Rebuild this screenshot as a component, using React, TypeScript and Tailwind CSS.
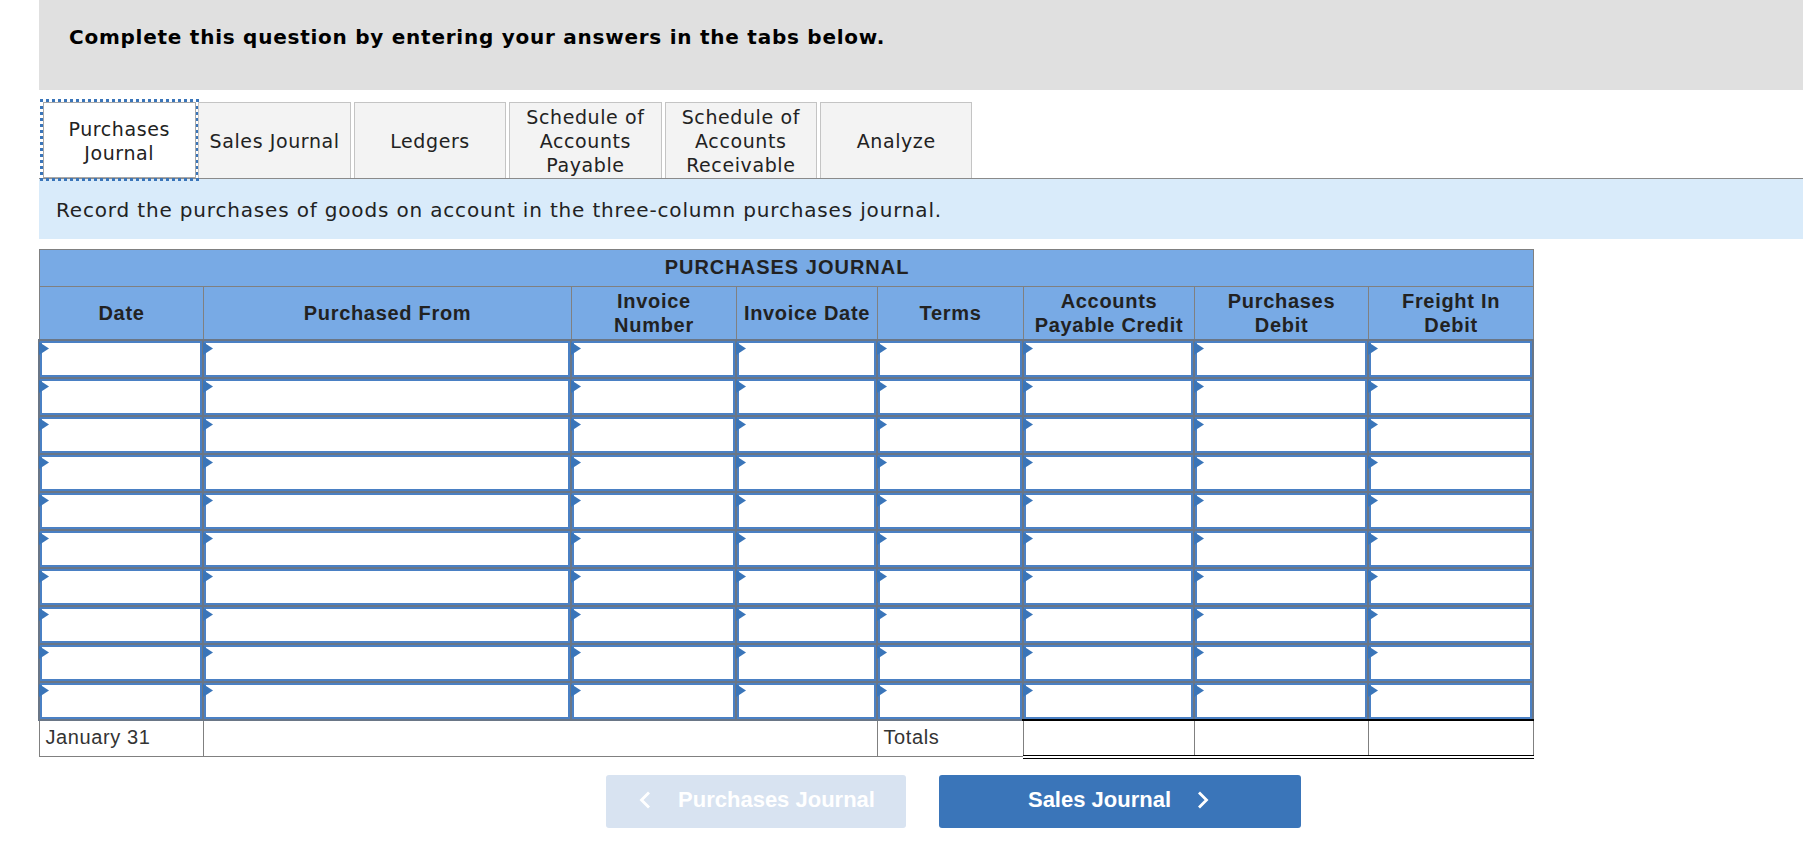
import React from "react";

const tabs = [
  { label: ["Purchases", "Journal"], active: true },
  { label: ["Sales Journal"] },
  { label: ["Ledgers"] },
  { label: ["Schedule of", "Accounts", "Payable"] },
  { label: ["Schedule of", "Accounts", "Receivable"] },
  { label: ["Analyze"] },
];

const colWidths = [164, 368, 165, 141, 146, 171, 174, 165];
const headers: string[][] = [
  ["Date"],
  ["Purchased From"],
  ["Invoice", "Number"],
  ["Invoice Date"],
  ["Terms"],
  ["Accounts", "Payable Credit"],
  ["Purchases", "Debit"],
  ["Freight In", "Debit"],
];

function InputCell() {
  return (
    <td className="border-2 border-[#6a7686] p-0 h-[38px]">
      <div className="relative h-[36px] border-2 border-[#4a80c4] bg-white">
        <svg className="absolute left-[-3px] top-[-1px]" width="10" height="13" viewBox="0 0 10 13">
          <path d="M0 0 L10 6.5 L0 13 Z" fill="#3a75b9" />
        </svg>
      </div>
    </td>
  );
}

export default function App() {
  return (
    <div className="min-h-[858px] bg-white font-['DejaVu_Sans',sans-serif] text-[#222]">
      <div className="ml-[39px] h-[90px] bg-[#e0e0e0] pl-[30px] pt-[22px]">
        <p className="text-[20px] leading-[30px] font-bold text-black tracking-[0.75px]">
          Complete this question by entering your answers in the tabs below.
        </p>
      </div>

      <div className="ml-[39px] mt-[12px] flex h-[77px] gap-[2.9px] border-b border-[#8a8a8a] pl-[4px]">
        {tabs.map((t, i) => (
          <div
            key={i}
            className={
              "flex h-[76px] w-[152.5px] flex-col items-center justify-center border text-[19px] leading-[24px] tracking-[0.6px] text-[#222] " +
              (t.active
                ? "border-[#a8a8a8] bg-white pt-[1px] outline-[3px] outline-dotted outline-[#3a75b9]"
                : "border-[#c4c4c4] border-b-0 bg-[#f3f3f3]")
            }
          >
            {t.label.map((l) => (
              <span key={l} className="whitespace-nowrap">{l}</span>
            ))}
          </div>
        ))}
      </div>

      <div className="ml-[39px] flex h-[60px] items-center bg-[#d9ebfa] pl-[17px] pt-[1px] text-[20px] tracking-[0.83px] text-[#222]">
        Record the purchases of goods on account in the three-column purchases journal.
      </div>

      <table className="ml-[38px] mt-[10px] w-[1495px] table-fixed border-collapse font-['Liberation_Sans',sans-serif]">
        <colgroup>
          {colWidths.map((w, i) => (
            <col key={i} style={{ width: w }} />
          ))}
        </colgroup>
        <thead>
          <tr>
            <th colSpan={8} className="h-[37px] border border-[#808080] bg-[#78aae5] p-0 pb-[2px] pl-[2px] text-[20px] font-bold tracking-[1px] text-[#222]">
              PURCHASES JOURNAL
            </th>
          </tr>
          <tr>
            {headers.map((h, i) => (
              <th key={i} className="h-[53px] border border-[#808080] bg-[#78aae5] p-0 pl-[1px] text-[20px] leading-[24px] font-bold tracking-[0.7px] text-[#222]">
                {h.map((l) => (
                  <div key={l} className="whitespace-nowrap">{l}</div>
                ))}
              </th>
            ))}
          </tr>
        </thead>
        <tbody>
          {Array.from({ length: 10 }).map((_, r) => (
            <tr key={r}>
              {colWidths.map((_, c) => (
                <InputCell key={c} />
              ))}
            </tr>
          ))}
          <tr className="text-[20px] tracking-[0.6px] text-[#333]">
            <td className="h-[37px] border border-[#808080] pb-[2px] pl-[6px]">January 31</td>
            <td colSpan={3} className="border border-[#808080]" />
            <td className="border border-[#808080] pb-[2px] pl-[6px]">Totals</td>
            <td className="border-x border-x-[#808080] border-t-2 border-t-black border-b-4 border-double border-b-black" />
            <td className="border-x border-x-[#808080] border-t-2 border-t-black border-b-4 border-double border-b-black" />
            <td className="border-x border-x-[#808080] border-t-2 border-t-black border-b-4 border-double border-b-black" />
          </tr>
        </tbody>
      </table>

      <div className="ml-[606px] mt-[16px] flex gap-[33px] font-['Liberation_Sans',sans-serif] text-[22px] font-bold text-white">
        <div className="flex h-[53px] w-[300px] items-center justify-center gap-[27px] rounded-[3px] bg-[#d8e3f1] pb-[3px] pl-[2px]">
          <svg width="12" height="20" viewBox="0 0 12 20" fill="none" stroke="white" strokeWidth="2.8">
            <path d="M10 2.5 L2.5 10 L10 17.5" />
          </svg>
          <span>Purchases Journal</span>
        </div>
        <div className="flex h-[53px] w-[362px] items-center justify-center gap-[26px] rounded-[3px] bg-[#3a75b9] pb-[3px] pr-[3px]">
          <span>Sales Journal</span>
          <svg width="12" height="20" viewBox="0 0 12 20" fill="none" stroke="white" strokeWidth="2.8">
            <path d="M2 2.5 L9.5 10 L2 17.5" />
          </svg>
        </div>
      </div>
    </div>
  );
}
